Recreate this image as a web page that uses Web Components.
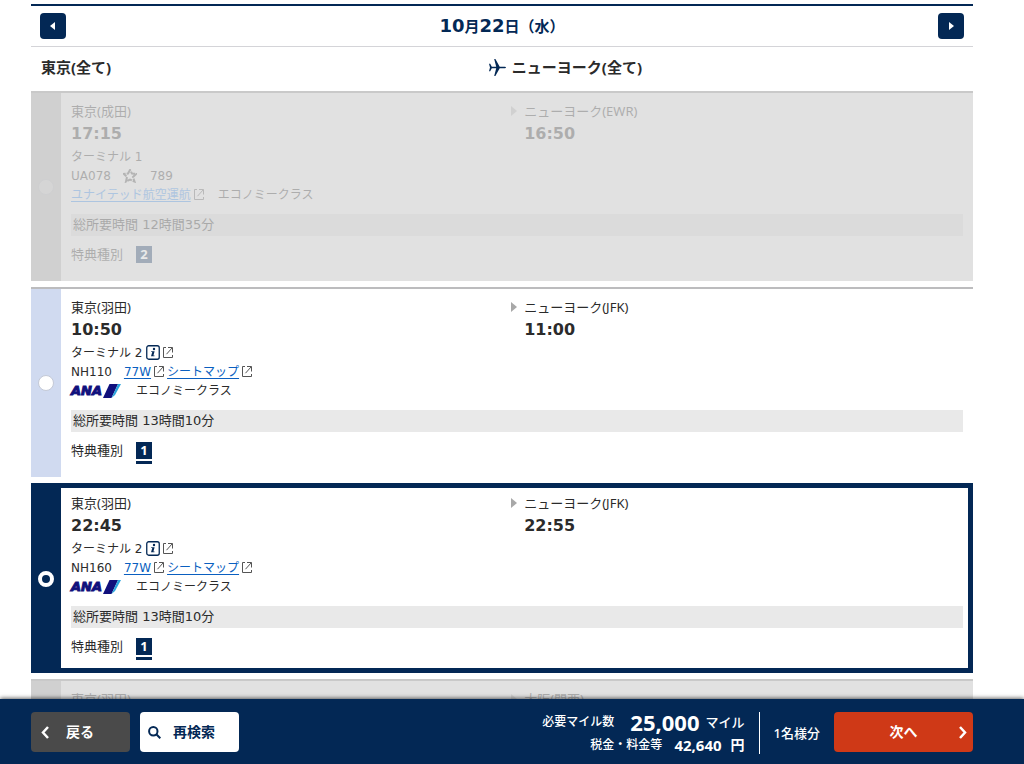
<!DOCTYPE html>
<html lang="ja">
<head>
<meta charset="utf-8">
<meta name="viewport" content="width=device-width, initial-scale=1">
<title>フライト選択</title>
<style>
  :root {
    --navy: #032855;
    --ink: #2b2b2b;
    --link: #0a5fc0;
    --latin: "DejaVu Sans", "Noto Sans CJK JP", sans-serif;
    --humanist: "Noto Sans", "Noto Sans CJK JP", sans-serif;
    --page-left: 31px;
    --page-right: 51px;
  }
  body { margin: 0; background: #fff; color: var(--ink); font: 12px/20px var(--latin); }
</style>
</head>
<body>
<booking-page>
  <date-bar><b>10</b>月<b>22</b>日（水）</date-bar>
  <route-bar>
    <span slot="from">東京(全て)</span>
    <span slot="to">ニューヨーク(全て)</span>
  </route-bar>
  <flight-card disabled from="東京(成田)" depart="17:15" to="ニューヨーク(EWR)" arrive="16:50"
    terminal="1" flight="UA078" aircraft="789" operator="ユナイテッド航空運航" duration="12時間35分" award="2"></flight-card>
  <flight-card from="東京(羽田)" depart="10:50" to="ニューヨーク(JFK)" arrive="11:00"
    terminal="2" flight="NH110" aircraft="77W" duration="13時間10分" award="1"></flight-card>
  <flight-card selected from="東京(羽田)" depart="22:45" to="ニューヨーク(JFK)" arrive="22:55"
    terminal="2" flight="NH160" aircraft="77W" duration="13時間10分" award="1"></flight-card>
  <flight-card disabled from="東京(羽田)" to="大阪(関西)"></flight-card>
  <summary-bar slot="footer">
    <span slot="miles">25,000</span>
    <span slot="tax">42,640</span>
    <span slot="people">1名様分</span>
  </summary-bar>
</booking-page>

<script>
class ShadowElement extends HTMLElement {
  connectedCallback() {
    if (this.shadowRoot) return;
    this.attachShadow({ mode: "open" }).innerHTML = this.render();
    this.ready();
  }
  ready() {}
}

customElements.define("booking-page", class extends ShadowElement {
  render() {
    return `<style>
      :host { display: flex; flex-direction: column; height: 100vh; }
      main { flex: 1; min-height: 0; overflow: hidden; display: flex; flex-direction: column;
        padding: 4px var(--page-right) 0 var(--page-left); }
      ::slotted(*) { flex: none; }
    </style>
    <main><slot></slot></main>
    <slot name="footer"></slot>`;
  }
  ready() {
    this.addEventListener("flight-select", e => {
      for (const card of this.querySelectorAll("flight-card")) {
        card.toggleAttribute("selected", card === e.target);
        card.sync();
      }
    });
  }
});

customElements.define("date-bar", class extends ShadowElement {
  render() {
    return `<style>
      :host { display: flex; align-items: center; justify-content: space-between; height: 40px;
        padding: 0 9px; border-top: 2px solid var(--navy); border-bottom: 1px solid #d4d4d8; }
      h2 { margin: 0; color: var(--navy); font: bold 15px/24px var(--latin); }
      ::slotted(b) { font-size: 18px; }
      button { display: grid; place-items: center; width: 26px; height: 26px; padding: 0;
        border: 0; border-radius: 4px; background: var(--navy); }
    </style>
    <button aria-label="前の日"><svg width="6" height="8" viewBox="0 0 6 8"><path d="M5 0v8L0 4z" fill="#fff"/></svg></button>
    <h2><slot></slot></h2>
    <button aria-label="次の日"><svg width="6" height="8" viewBox="0 0 6 8"><path d="M1 0v8l5-4z" fill="#fff"/></svg></button>`;
  }
});

customElements.define("route-bar", class extends ShadowElement {
  render() {
    return `<style>
      :host { display: grid; grid-template-columns: 17fr 18fr; height: 40px; padding: 0 10px 4px;
        align-items: center; font: bold 15px/24px var(--humanist); }
      div { display: flex; align-items: center; gap: 6px; }
    </style>
    <div><slot name="from"></slot></div>
    <div><svg width="17" height="17" viewBox="0 0 17 17" aria-hidden="true">
      <path d="M0 4.8h1.200l1.600 2.900h4.400L5.200 0h1.200l4.300 7.700h4.700c.9 0 1.600.4 1.600.8s-.7.8-1.600.8h-4.700L6.400 17H5.200l2-7.700H2.800l-1.600 2.900H0l1-3.700z" fill="#032855"/></svg>
      <slot name="to"></slot></div>`;
  }
});

customElements.define("external-icon", class extends ShadowElement {
  render() {
    return `<style>:host { display: block; width: 10px; height: 11px; } svg { display: block; }</style>
    <svg width="10" height="11" viewBox="0 0 10 11" fill="none" stroke="#555" aria-hidden="true">
      <path d="M3 .5H.5v10h9V8M5 .5h4.500v5M9.200 .8L3.500 7.200"/></svg>`;
  }
});

customElements.define("ana-logo", class extends ShadowElement {
  render() {
    return `<style>
      :host { display: flex; align-items: center; width: 51px; color: #10107c;
        font: italic bold 13px/14px "DejaVu Sans", sans-serif; -webkit-text-stroke: 1px #10107c; }
      svg { flex: none; }
    </style>ANA<svg width="19" height="14" viewBox="0 0 19 14" aria-hidden="true">
      <path d="M7.500 0H16L9.500 14H1z" fill="#10107c"/><path d="M16 0h3l-6 11-3.500 3z" fill="#2ba4dc"/></svg>`;
  }
});

customElements.define("flight-card", class extends ShadowElement {
  render() {
    const a = n => this.getAttribute(n) || "";
    const full = this.hasAttribute("flight");
    const partner = this.hasAttribute("operator");
    const craft = partner
      ? `<svg class="star" width="14" height="14" viewBox="0 0 14 14" fill="none" stroke="#444" stroke-width="2" stroke-dasharray="5 1" aria-hidden="true"><path d="M5 4.500L7 1l2 3.500 4 .5-3 3 1.500 4.500L7 10.500l-4 2L4 8 1 5z"/></svg><span>${a("aircraft")}</span>`
      : `<a href="#aircraft">${a("aircraft")}</a><external-icon></external-icon><a href="#seatmap">シートマップ</a><external-icon></external-icon>`;
    const carrier = partner
      ? `<a href="#operator">${a("operator")}</a><external-icon></external-icon>`
      : `<ana-logo></ana-logo>`;
    const info = partner ? "" : `<svg class="info" width="14" height="15" viewBox="0 0 14 15" role="img" aria-label="ターミナル情報">
        <rect x=".75" y=".75" width="12.500" height="13.500" rx="2" fill="#fff" stroke="#032855" stroke-width="1.300"/>
        <circle cx="8" cy="4" r="1.200" fill="#032855"/><path d="M5.300 6.200H8.600L7.400 10.400h1.200l-.2.900H5l1.300-4.300H5.100z" fill="#032855"/></svg><external-icon></external-icon>`;
    const details = full ? `
          <div class="time" id="depart">${a("depart")}</div>
          <div class="row"><span>ターミナル ${a("terminal")}</span>${info}</div>
          <div class="row"><span class="number">${a("flight")}</span>${craft}</div>
          <div class="row carrier">${carrier}<span class="cabin">エコノミークラス</span></div>` : "";
    const summary = full ? `
      <div class="duration"><span>総所要時間 ${a("duration")}</span></div>
      <div class="award">特典種別<div class="badge"><b>${a("award")}</b></div></div>` : "";
    return `<style>
      :host { display: grid; grid-template-columns: 30px 1fr; box-sizing: border-box; height: 190px;
        margin-bottom: 6px; border-top: 2px solid #bcbcbe; background: #fff; }
      .side { display: grid; place-items: center; background: #d0daf0; }
      input { appearance: none; box-sizing: border-box; width: 16px; height: 16px; margin: 0;
        border: 1px solid #c4c9d6; border-radius: 50%; background: #fff; }
      .body { padding: 8px 10px 0; }
      .legs { display: grid; grid-template-columns: 97fr 100fr; }
      .city { font: 13px/20px var(--humanist); }
      .time { font: bold 16px/26px var(--latin); }
      .to { display: grid; grid-template-columns: 6px 1fr; column-gap: 7px; padding-left: 1px; align-content: start; align-items: center; }
      .to .time { grid-column: 2; }
      .row { display: flex; align-items: center; height: 19px; gap: 3px; white-space: nowrap; }
      .number { margin-right: 9px; }
      .cabin { margin-left: 11px; }
      .info { margin-left: 1px; }
      .star { margin-right: 10px; }
      a { color: var(--link); text-underline-offset: 2px; }
      .duration { margin-top: 10px; padding: 0 2px; background: #e9e9e9; font-size: 13px; line-height: 22px; height: 22px; }
      .award { display: flex; align-items: flex-start; gap: 13px; margin-top: 8px; font-size: 13px; line-height: 22px; }
      .badge { margin-top: 2px; border-bottom: 3px solid var(--navy); padding-bottom: 2px; }
      .badge b { display: block; width: 16px; height: 17px; background: var(--navy); color: #fff;
        font: bold 13px/17px var(--humanist); text-align: center; }
      :host([selected]) { border-color: var(--navy); box-shadow: inset 0 3px var(--navy), inset -5px -5px var(--navy); }
      :host([selected]) .side { background: var(--navy); }
      :host([selected]) input { border: 4px solid #fff; background: var(--navy); }
      :host([disabled]) { background: #e1e1e1; border-color: #c9c9c9; }
      :host([disabled]) .side { background: #d0d0d0; }
      :host([disabled]) input { opacity: .12; }
      :host([disabled]) .legs, :host([disabled]) .award, :host([disabled]) .duration span { opacity: .28; }
      :host([disabled]) .duration { background: #dbdbdb; }
      :host([disabled]) .badge { border: 0; }
      :host([disabled]) a { color: #2a7fe0; }
    </style>
    <div class="side"><input type="radio" aria-labelledby="city depart" ${this.hasAttribute("disabled") ? "disabled" : ""}></div>
    <div class="body">
      <div class="legs">
        <div>
          <div class="city" id="city">${a("from")}</div>${details}
        </div>
        <div class="to">
          <svg width="6" height="10" viewBox="0 0 6 10" aria-hidden="true"><path d="M0 0l6 5-6 5z" fill="#a8a8a8"/></svg>
          <div class="city">${a("to")}</div>
          ${full ? `<div class="time">${a("arrive")}</div>` : ""}
        </div>
      </div>${summary}
    </div>`;
  }
  ready() {
    this.sync();
    this.shadowRoot.querySelector("input").addEventListener("change", () =>
      this.dispatchEvent(new CustomEvent("flight-select", { bubbles: true })));
  }
  sync() {
    this.shadowRoot.querySelector("input").checked = this.hasAttribute("selected");
  }
});

customElements.define("summary-bar", class extends ShadowElement {
  render() {
    return `<style>
      :host { display: flex; align-items: flex-start; box-sizing: border-box; height: 65px; position: relative;
        padding: 13px var(--page-right) 0 var(--page-left); background: var(--navy); color: #fff;
        box-shadow: 0 -1px 4px #0009; font: 500 12px/20px var(--humanist); }
      button { display: flex; align-items: center; height: 40px; border: 0; border-radius: 4px;
        font: bold 14px/20px var(--humanist); color: #fff; padding: 0 9px; }
      .back { width: 99px; background: #4a4a4a; gap: 16px; }
      .search { width: 99px; background: #fff; color: var(--navy); margin-left: 10px; gap: 12px; padding: 0 8px; }
      .next { width: 139px; background: #cf3917; display: grid; grid-template-columns: 10px 1fr 10px; padding: 0 5px 0 5px; }
      .totals { display: grid; grid-template-rows: 20px 26px; box-sizing: border-box; margin-left: auto;
        padding-right: 14px; border-right: 1px solid #fff; height: 42px; }
      .line { display: flex; justify-content: flex-end; align-items: center; }
      .miles { font-size: 22px; font-weight: bold; margin: 0 6px 0 16px; }
      .unit { font-size: 13px; }
      .tax { font-size: 15px; font-weight: bold; margin: 0 9px 0 12px; }
      .yen { font-size: 14px; font-weight: bold; }
      .people { margin: 0 14px; font-size: 13px; line-height: 42px; }
    </style>
    <button class="back"><svg width="10" height="13" viewBox="0 0 10 13" fill="none" stroke="#fff" stroke-width="2.500" aria-hidden="true"><path d="M8 1L3 6.500 8 12"/></svg><span>戻る</span></button>
    <button class="search"><svg width="13" height="13" viewBox="0 0 13 13" fill="none" stroke="#032855" stroke-width="2" aria-hidden="true"><circle cx="5.300" cy="5.300" r="4.200"/><path d="M8.300 8.300l4 4"/></svg><span>再検索</span></button>
    <div class="totals">
      <div class="line"><span>必要マイル数</span><span class="miles"><slot name="miles"></slot></span><span class="unit">マイル</span></div>
      <div class="line"><span>税金・料金等</span><span class="tax"><slot name="tax"></slot></span><span class="yen">円</span></div>
    </div>
    <span class="people"><slot name="people"></slot></span>
    <button class="next"><i></i><span>次へ</span><svg width="10" height="13" viewBox="0 0 10 13" fill="none" stroke="#fff" stroke-width="2.500" aria-hidden="true"><path d="M2 1l5 5.500L2 12"/></svg></button>`;
  }
});
</script>
</body>
</html>
